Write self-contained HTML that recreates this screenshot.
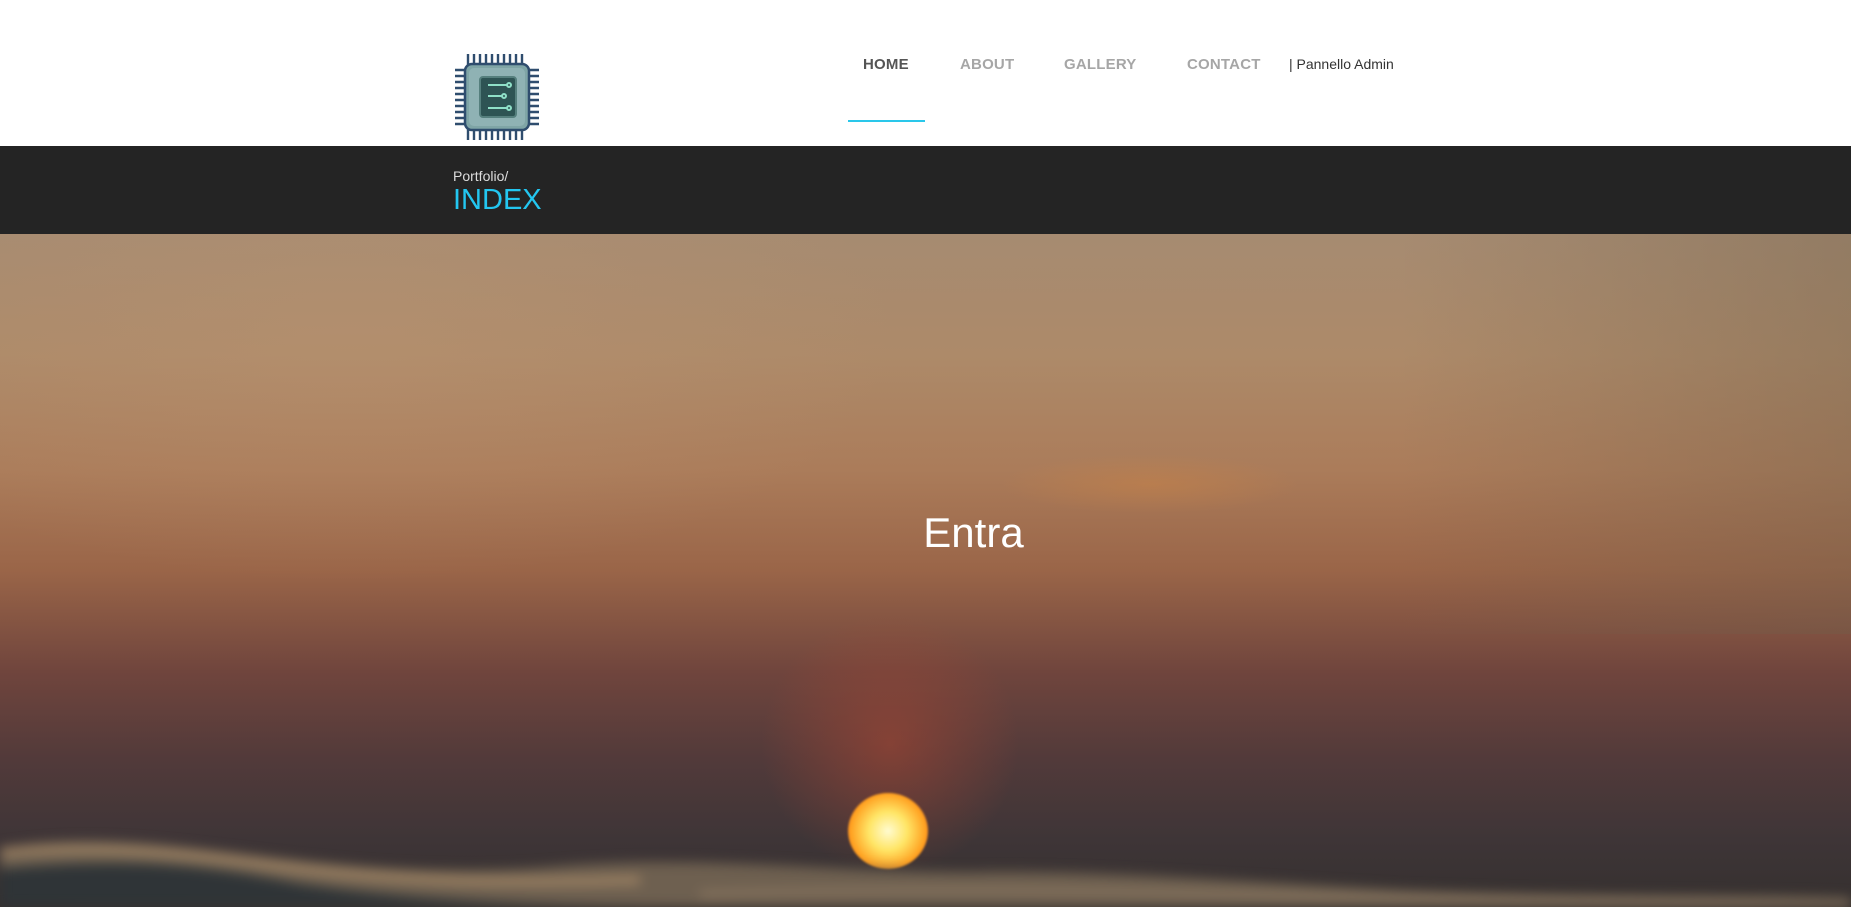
<!DOCTYPE html>
<html style="overflow:hidden"><head><meta charset="utf-8"><style>
*{margin:0;padding:0;box-sizing:border-box}
html,body{width:1851px;height:907px;overflow:hidden}
body{font-family:"Liberation Sans",Arial,sans-serif;background:#fff;position:relative}
.hdr{position:absolute;left:0;top:0;width:1851px;height:146px;background:#fff}
.nav a{position:absolute;top:56px;font-size:15px;font-weight:bold;color:#a6a6a6;text-decoration:none;letter-spacing:0.2px}
.bar{position:absolute;left:0;top:146px;width:1851px;height:88px;background:#242424}
.hero{position:absolute;left:0;top:234px;width:1851px;height:673px;overflow:hidden;
background:linear-gradient(180deg,#a68b71 0%,#ad8a69 18%,#ab7c5a 35%,#9a6548 50%,#70453d 65%,#523a3a 78%,#3e3537 90%,#35302f 100%)}
</style></head><body>
<div class="hdr">
<svg style="position:absolute;left:452px;top:52px" width="90" height="90" viewBox="0 0 90 90">
<g stroke="#2f4d6e" stroke-width="2.4">
<path d="M16 2v12M22 2v12M28 2v12M34 2v12M40 2v12M46 2v12M52 2v12M58 2v12M64 2v12M70 2v12"/>
<path d="M16 76v12M22 76v12M28 76v12M34 76v12M40 76v12M46 76v12M52 76v12M58 76v12M64 76v12M70 76v12"/>
<path d="M3 18h12M3 24h12M3 30h12M3 36h12M3 42h12M3 48h12M3 54h12M3 60h12M3 66h12M3 72h12"/>
<path d="M75 18h12M75 24h12M75 30h12M75 36h12M75 42h12M75 48h12M75 54h12M75 60h12M75 66h12M75 72h12"/>
</g>
<rect x="13" y="12" width="64" height="66" rx="7" fill="#7fa5a6" stroke="#2f4d6e" stroke-width="2.5"/>
<rect x="17" y="16" width="56" height="58" rx="5" fill="#8fb2b4"/>
<rect x="28" y="25" width="36" height="40" rx="3" fill="#2e5454" stroke="#557f7d" stroke-width="2"/>
<g stroke="#8fe0c8" stroke-width="2" fill="none"><path d="M36 33h19M36 44h14M36 56h19"/><circle cx="57" cy="33" r="2"/><circle cx="52" cy="44" r="2"/><circle cx="57" cy="56" r="2"/></g>
</svg>
<div class="nav">
<a style="left:863px;color:#555">HOME</a>
<a style="left:960px">ABOUT</a>
<a style="left:1064px">GALLERY</a>
<a style="left:1187px">CONTACT</a>
<span style="position:absolute;left:1289px;top:56px;font-size:14px;color:#333">| Pannello Admin</span>
</div>
<div style="position:absolute;left:848px;top:120px;width:77px;height:2px;background:#2ac7ea"></div>
</div>
<div class="bar">
<div style="position:absolute;left:453px;top:22px;font-size:14px;color:#ddd">Portfolio/</div>
<div style="position:absolute;left:453px;top:38px;font-size:29px;color:#23c6f0">INDEX</div>
</div>
<div class="hero">
<div style="position:absolute;left:-200px;top:-150px;width:1100px;height:500px;border-radius:50%;background:radial-gradient(ellipse,rgba(190,150,115,.35),rgba(190,150,115,0) 70%)"></div>
<div style="position:absolute;left:1000px;top:220px;width:300px;height:60px;border-radius:50%;background:radial-gradient(ellipse,rgba(200,130,70,.5),rgba(200,130,70,0) 70%)"></div>
<div style="position:absolute;left:1400px;top:0;width:451px;height:400px;background:linear-gradient(90deg,rgba(120,100,80,0),rgba(110,95,75,.35))"></div>
<div style="position:absolute;left:760px;top:380px;width:260px;height:260px;border-radius:50%;background:radial-gradient(circle,rgba(170,70,50,.55),rgba(170,70,50,0) 70%)"></div>
<div style="position:absolute;left:848px;top:559px;width:80px;height:76px;border-radius:50%;background:radial-gradient(circle,#fffbd0 0%,#ffe566 35%,#ffa020 68%,#e0502a 90%,rgba(200,60,40,0) 100%);filter:blur(1px)"></div>
<div style="position:absolute;left:0;top:560px;width:1851px;height:113px;overflow:hidden">
<svg style="position:absolute;left:0;top:0;filter:blur(6px)" width="1851" height="113" viewBox="0 0 1851 113">
<path d="M0 260 L0 55 C80 40 160 50 260 62 C380 76 470 80 560 72 C700 60 860 80 980 78 C1100 76 1250 88 1400 96 C1600 104 1750 100 1851 104 L1851 113 L0 113Z" fill="#6e6050"/>
<path d="M0 75 C120 64 200 70 300 90 C420 108 560 112 700 112 L0 113Z" fill="#2f3437"/>
<path d="M0 58 C100 50 180 58 280 72 C400 88 520 90 640 86" stroke="#a08464" stroke-width="8" fill="none"/>
<path d="M700 100 C850 96 1000 95 1200 100 C1400 105 1650 108 1851 112" stroke="#8a7660" stroke-width="6" fill="none"/>
</svg>
</div>
<div style="position:absolute;left:0;width:1947px;top:275px;text-align:center;font-size:42px;color:#fff">Entra</div>
</div>
</body></html>
